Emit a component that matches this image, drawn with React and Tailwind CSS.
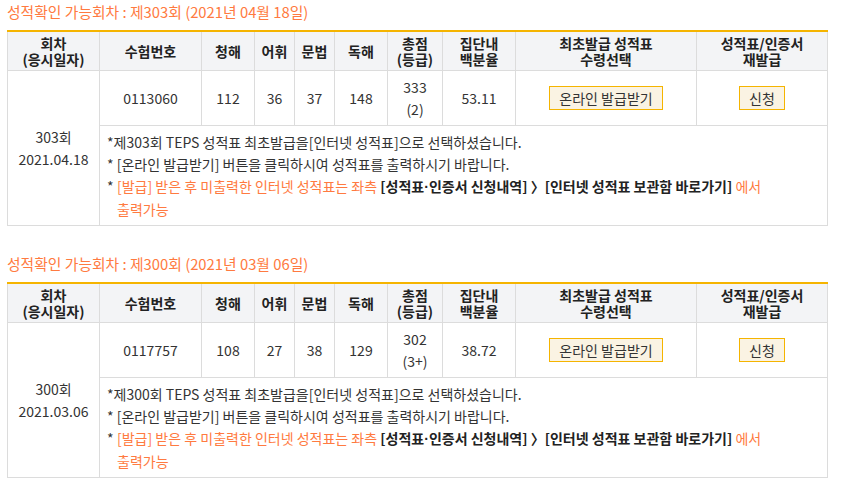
import React from "react";

const sessions = [
  {
    round: "303",
    date: "2021년 04월 18일",
    shortDate: "2021.04.18",
    examNo: "0113060",
    listening: 112,
    vocab: 36,
    grammar: 37,
    reading: 148,
    total: 333,
    grade: "2",
    percentile: "53.11",
  },
  {
    round: "300",
    date: "2021년 03월 06일",
    shortDate: "2021.03.06",
    examNo: "0117757",
    listening: 108,
    vocab: 27,
    grammar: 38,
    reading: 129,
    total: 302,
    grade: "3+",
    percentile: "38.72",
  },
];

const colWidths = [92, 102, 53, 40, 40, 53, 55, 73, 181, 131];

const Th = ({ children }) => (
  <th className="border border-[#dcdcdc] border-t-0 px-1 py-[3px] font-bold text-[#222] leading-[16px] text-center align-middle">
    {children}
  </th>
);

const Td = ({ children, className = "", ...rest }) => (
  <td
    {...rest}
    className={`border border-[#dcdcdc] text-center align-middle leading-[22px] text-[#333] ${className}`}
  >
    {children}
  </td>
);

const SessionTable = ({ s }) => (
  <div>
    <div className="h-[24px] leading-[24px] text-[14.8px] text-[#ff7a40] pl-[7px] mb-[6px]">
      성적확인 가능회차 : 제{s.round}회 ({s.date})
    </div>
    <table className="ml-[7px] w-[820px] table-fixed border-collapse border-t-2 border-t-[#f5b400] text-[14px]">
      <colgroup>
        {colWidths.map((w, i) => (
          <col key={i} style={{ width: w }} />
        ))}
      </colgroup>
      <thead>
        <tr className="bg-[#f3f4f6] h-[39px]">
          <Th>
            회차
            <br />
            (응시일자)
          </Th>
          <Th>수험번호</Th>
          <Th>청해</Th>
          <Th>어휘</Th>
          <Th>문법</Th>
          <Th>독해</Th>
          <Th>
            총점
            <br />
            (등급)
          </Th>
          <Th>
            집단내
            <br />
            백분율
          </Th>
          <Th>
            최초발급 성적표
            <br />
            수령선택
          </Th>
          <Th>
            성적표/인증서
            <br />
            재발급
          </Th>
        </tr>
      </thead>
      <tbody>
        <tr className="h-[55px]">
          <Td rowSpan={2}>
            <div>{s.round}회</div>
            <div>{s.shortDate}</div>
          </Td>
          <Td>{s.examNo}</Td>
          <Td>{s.listening}</Td>
          <Td>{s.vocab}</Td>
          <Td>{s.grammar}</Td>
          <Td>{s.reading}</Td>
          <Td>
            {s.total}
            <br />({s.grade})
          </Td>
          <Td>{s.percentile}</Td>
          <Td>
            <button className="h-[24px] px-[9px] border border-[#f5b400] bg-[#faf3e3] text-[#333] leading-[22px]">
              온라인 발급받기
            </button>
          </Td>
          <Td>
            <button className="h-[24px] px-[9px] border border-[#f5b400] bg-[#faf3e3] text-[#333] leading-[22px]">
              신청
            </button>
          </Td>
        </tr>
        <tr>
          <td
            colSpan={9}
            className="border border-[#dcdcdc] text-left align-top pl-[7px] pr-[10px] py-[5px] leading-[22px] text-[#333]"
          >
            <div>*제{s.round}회 TEPS 성적표 최초발급을[인터넷 성적표]으로 선택하셨습니다.</div>
            <div>* [온라인 발급받기] 버튼을 클릭하시여 성적표를 출력하시기 바랍니다.</div>
            <div className="flex">
              <span className="w-[10px] shrink-0">*</span>
              <span className="text-[#ff7a40]">
                [발급] 받은 후 미출력한 인터넷 성적표는 좌측{" "}
                <b className="text-[#222]">
                  [성적표
                  <span className="font-['Liberation_Sans']">·</span>
                  인증서 신청내역] 〉[인터넷 성적표 보관함 바로가기]
                </b>{" "}
                에서
                <br />
                출력가능
              </span>
            </div>
          </td>
        </tr>
      </tbody>
    </table>
  </div>
);

export default function App() {
  return (
    <div
      className="bg-white w-[843px] h-[488px] overflow-hidden"
      style={{ fontFamily: '"Noto Sans CJK KR", "Noto Sans", sans-serif' }}
    >
      <SessionTable s={sessions[0]} />
      <div className="mt-[26px]">
        <SessionTable s={sessions[1]} />
      </div>
    </div>
  );
}
